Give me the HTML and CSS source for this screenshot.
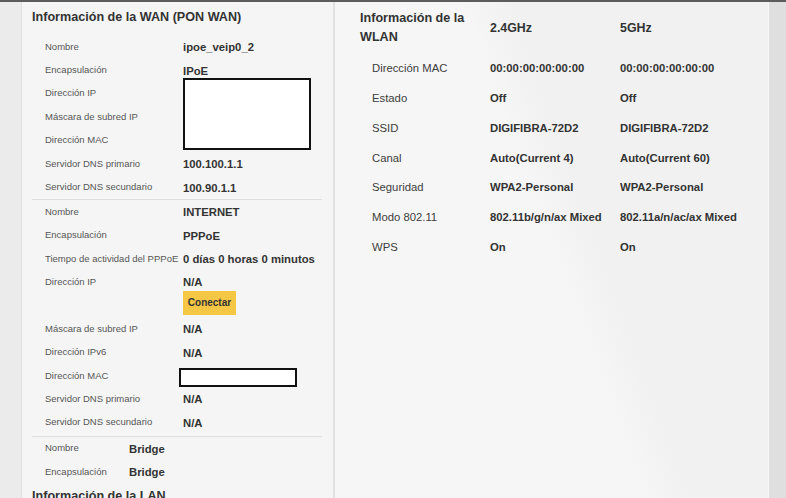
FILE: index.html
```html
<!DOCTYPE html>
<html lang="es">
<head>
<meta charset="utf-8">
<title>Estado</title>
<link rel="stylesheet" href="styles.css">
</head>
<body>
<div class="page">
  <div class="strip-left"></div>
  <section class="panel wan">
    <h2 class="title">Información de la WAN (PON WAN)</h2>
    <div class="group">
      <span class="lbl">Nombre</span><span class="val">ipoe_veip0_2</span>
      <span class="lbl">Encapsulación</span><span class="val">IPoE</span>
      <span class="lbl">Dirección IP</span><span class="val mask mask-lg"></span>
      <span class="lbl">Máscara de subred IP</span>
      <span class="lbl">Dirección MAC</span>
      <span class="lbl">Servidor DNS primario</span><span class="val">100.100.1.1</span>
      <span class="lbl">Servidor DNS secundario</span><span class="val">100.90.1.1</span>
    </div>
    <div class="sep"></div>
    <div class="group">
      <span class="lbl">Nombre</span><span class="val">INTERNET</span>
      <span class="lbl">Encapsulación</span><span class="val">PPPoE</span>
      <span class="lbl">Tiempo de actividad del PPPoE</span><span class="val">0 días 0 horas 0 minutos</span>
      <span class="lbl">Dirección IP</span><span class="val">N/A</span>
      <span class="val btn-cell"><button class="btn" type="button">Conectar</button></span>
      <span class="lbl">Máscara de subred IP</span><span class="val">N/A</span>
      <span class="lbl">Dirección IPv6</span><span class="val">N/A</span>
      <span class="lbl">Dirección MAC</span><span class="val mask mask-sm"></span>
      <span class="lbl">Servidor DNS primario</span><span class="val">N/A</span>
      <span class="lbl">Servidor DNS secundario</span><span class="val">N/A</span>
    </div>
    <div class="sep sep-2"></div>
    <div class="group group-narrow">
      <span class="lbl">Nombre</span><span class="val">Bridge</span>
      <span class="lbl">Encapsulación</span><span class="val">Bridge</span>
    </div>
    <h2 class="title title-lan">Información de la LAN</h2>
  </section>
  <div class="divider"></div>
  <section class="panel wlan">
    <div class="wgrid">
      <h2 class="wtitle">Información de la WLAN</h2>
      <span class="whead">2.4GHz</span>
      <span class="whead">5GHz</span>

      <span class="wlbl">Dirección MAC</span><span class="wval">00:00:00:00:00:00</span><span class="wval">00:00:00:00:00:00</span>
      <span class="wlbl">Estado</span><span class="wval">Off</span><span class="wval">Off</span>
      <span class="wlbl">SSID</span><span class="wval">DIGIFIBRA-72D2</span><span class="wval">DIGIFIBRA-72D2</span>
      <span class="wlbl">Canal</span><span class="wval">Auto(Current 4)</span><span class="wval">Auto(Current 60)</span>
      <span class="wlbl">Seguridad</span><span class="wval">WPA2-Personal</span><span class="wval">WPA2-Personal</span>
      <span class="wlbl">Modo 802.11</span><span class="wval">802.11b/g/n/ax Mixed</span><span class="wval">802.11a/n/ac/ax Mixed</span>
      <span class="wlbl">WPS</span><span class="wval">On</span><span class="wval">On</span>
    </div>
  </section>
  <div class="strip-right"></div>
</div>
</body>
</html>
```

FILE: styles.css
```css
* {
  box-sizing: border-box;
  margin: 0;
  padding: 0;
}

html,
body {
  height: 100%;
  overflow: hidden;
}

body {
  font-family: "Liberation Sans", Arial, Helvetica, sans-serif;
  background: #ececec;
  color: #333;
}

.page {
  display: flex;
  height: 498px;
  border-top: 2px solid #5c5c5c;
  overflow: hidden;
}

.strip-left {
  flex: none;
  width: 22px;
  background: #ebebeb;
  border-right: 1px solid #e0e0e0;
}

.panel {
  flex: none;
}

.wan {
  width: 311px;
  background: #f5f5f5;
  padding: 6.7px 0 0 10px;
}

.divider {
  flex: none;
  width: 2px;
  background: #e1e1e1;
}

.wlan {
  width: 433px;
  padding-left: 25px;
  background: linear-gradient(70deg, #f6f6f6 0%, #f6f6f6 50%, #f1f1f1 58%, #f1f1f1 100%);
}

.strip-right {
  flex: 1;
  background: #dfdfdf;
  border-left: 1px solid #f7f7f7;
}

.title {
  font-size: 12.6px;
  font-weight: bold;
  line-height: 16px;
  color: #333;
  margin-bottom: 10.8px;
  white-space: nowrap;
}

.title-lan {
  margin-top: 4px;
}

.group {
  display: grid;
  grid-template-columns: 138px 1fr;
  grid-auto-rows: 23.4px;
  align-items: center;
  margin-left: 13px;
}

.group-narrow {
  grid-template-columns: 84px 1fr;
}

.lbl {
  grid-column: 1;
  font-size: 9.5px;
  color: #555;
  padding-bottom: 2px;
  white-space: nowrap;
}

.val {
  grid-column: 2;
  font-size: 11.3px;
  font-weight: bold;
  color: #333;
  white-space: nowrap;
}

.mask {
  display: block;
  background: #fff;
  border: 2px solid #111;
}

.mask-lg {
  grid-row: span 3;
  align-self: start;
  width: 128.4px;
  height: 71.7px;
  margin-top: -4px;
}

.mask-sm {
  width: 118.4px;
  height: 18.4px;
  margin-left: -4px;
  margin-top: 2.6px;
}

.btn-cell {
  align-self: start;
  margin-top: -3.6px;
}

.btn {
  display: block;
  width: 53px;
  height: 24.6px;
  border: none;
  background: #f6c744;
  color: #333;
  font-family: inherit;
  font-size: 10px;
  font-weight: bold;
  text-align: center;
}

.sep {
  height: 1px;
  width: 290px;
  background: #dedede;
  margin: 0.2px 0 0.2px 0;
}

.sep-2 {
  margin: 1px 0 0.5px 0;
}

.wgrid {
  display: grid;
  grid-template-columns: 130px 130px 1fr;
  grid-template-rows: 51.4px;
  grid-auto-rows: 29.75px;
  align-items: center;
}

.wtitle {
  font-size: 12.6px;
  font-weight: bold;
  line-height: 19px;
  color: #333;
}

.whead {
  font-size: 12.4px;
  font-weight: bold;
  color: #333;
}

.wlbl {
  padding-left: 12px;
  font-size: 11.3px;
  color: #3d3d3d;
  white-space: nowrap;
}

.wval {
  font-size: 11.3px;
  font-weight: bold;
  color: #333;
  white-space: nowrap;
}
```
